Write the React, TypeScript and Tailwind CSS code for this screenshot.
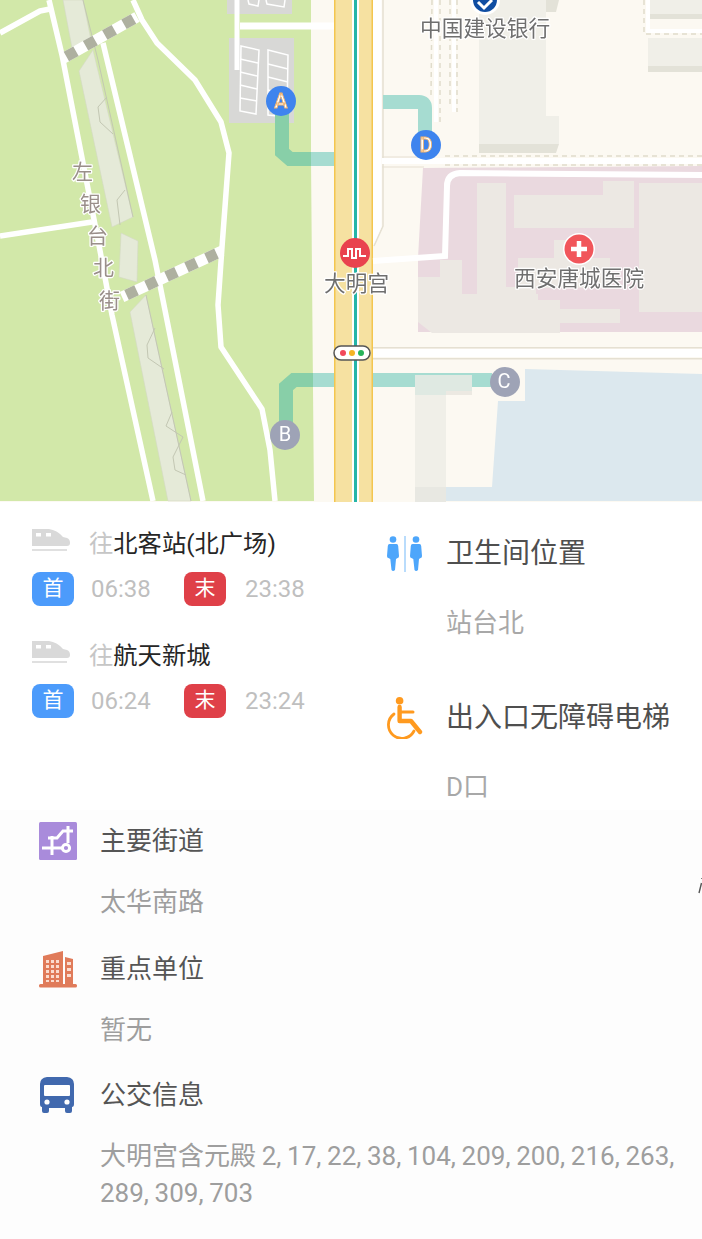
const cjk = "font-['Roboto','Noto_Sans_CJK_SC',sans-serif]";

function MapView() {
  const labelCls = { fontFamily: "'Noto Sans CJK SC', sans-serif", paintOrder: 'stroke' as const, stroke: '#ffffff', strokeWidth: 2.5, strokeLinejoin: 'round' as const };
  return (
    <svg viewBox="0 0 702 502" width="702" height="502" className="block blur-[0.5px]">
      <rect width="702" height="502" fill="#fcf9f2" />
      {/* park */}
      <polygon points="0,0 311,0 311,160 314,501 0,501" fill="#d2e8a9" />

      {/* green islands */}
      <g fill="#e5ead8" stroke="#d4d9c4" strokeWidth="0.6">
        <polygon points="63,0 83,0 91,40 72,48" />
        <polygon points="79,71 93,50 133,217 112,227" />
        <polygon points="121,233 138,241 137,282 119,277" />
        <polygon points="130,312 146,295 191,501 168,501" />
      </g>
      <g fill="none" stroke="#c3c7b3" strokeWidth="1">
        <path d="M83 0 L98 60 L133 217" />
        <path d="M146 295 L191 501" />
        <path d="M107 97 L98 107 L100 122 L113 134" />
        <path d="M125 190 L117 200 L120 225" />
        <path d="M155 328 L147 345 L148 358 L164 369" />
        <path d="M172 412 L166 426 L183 437 L173 457 L175 470 L186 475" />
      </g>

      {/* park paths */}
      <g fill="none" stroke="#ffffff" strokeWidth="5.5" strokeLinejoin="round">
        <path d="M49 0 L62 55 L98 240 L112 315 L153 501" />
        <path d="M103 43 L155 260 L203 501" />
        <path d="M133 0 L142 20 L157 43 L195 80 L221 122 L229 153 L222 247 L218 305 L221 347 L262 409 L270 450 L275 501" />
        <path d="M0 33 L40 11 L50 9" />
        <path d="M0 236 L92 222" />
      </g>
      <g fill="none" strokeWidth="11">
        <path d="M62 59 L137 17" stroke="#ffffff" />
        <path d="M62 59 L137 17" stroke="#aeb0a0" strokeDasharray="11 11" strokeDashoffset="-5" />
        <path d="M122 297 L222 251" stroke="#ffffff" />
        <path d="M122 297 L222 251" stroke="#aeb0a0" strokeDasharray="11 11" strokeDashoffset="-5" />
      </g>

      {/* parking */}
      <rect x="227" y="0" width="65" height="14" fill="#d8d8d6" />
      <rect x="229" y="38" width="65" height="85" fill="#d8d8d6" />
      <g fill="none" stroke="#ffffff" strokeWidth="1.5">
        <path d="M241 46 L259 50 L256 114 L240 111 Z" />
        <path d="M240 59 L258 63 M240 72 L257 76 M240 85 L257 89 M240 98 L257 101" />
        <path d="M268 50 L288 55 L287 117 L268 115 Z" />
        <path d="M268 64 L288 69 M268 77 L288 82 M268 90 L288 95 M268 103 L287 106" />
        <path d="M248 0 L249 4 L258 6 L259 0 M266 0 L267 4 L284 7 L285 0" />
      </g>
      <path d="M237 0 L237 70" stroke="#ffffff" strokeWidth="5" />
      <path d="M240 26 L334 26" stroke="#ffffff" strokeWidth="7" />

      {/* side road */}
      <path d="M383 0 L383 226 L374 246" fill="none" stroke="#e5e0d2" strokeWidth="1.5" />
      <path d="M377 0 L377 226 L368 246" fill="none" stroke="#ffffff" strokeWidth="9" />

      {/* main road */}
      <rect x="334" y="0" width="39" height="502" fill="#f6e1a1" />
      <rect x="334" y="0" width="1.5" height="502" fill="#f3c64f" />
      <rect x="371.5" y="0" width="1.5" height="502" fill="#f3c64f" />
      <rect x="352" y="0" width="7" height="502" fill="#ffffff" />
      <rect x="354" y="0" width="3" height="502" fill="#25b5a8" />

      {/* buildings top */}
      <rect x="479" y="0" width="67" height="116" fill="#f0efe8" />
      <rect x="479" y="116" width="80" height="28" fill="#f0efe8" />
      <polygon points="479,144 559,144 556,153 479,153" fill="#e3e2d8" />
      <polygon points="546,0 559,0 556,12 546,12" fill="#e3e2d8" />
      <rect x="650" y="0" width="52" height="14" fill="#f0efe8" />
      <rect x="650" y="14" width="52" height="5" fill="#e3e2d8" />
      <rect x="648" y="38" width="54" height="28" fill="#f0efe8" />
      <rect x="648" y="66" width="54" height="6" fill="#e3e2d8" />

      {/* dashed lanes */}
      <g fill="none" strokeWidth="1.5" stroke="#e0dccb" strokeDasharray="5 4">
        <path d="M432 0 L431 95" />
        <path d="M440 0 L440 125" />
        <path d="M450 0 L450 108" />
        <path d="M457 0 L457 112" />
        <path d="M644 0 L644 34 L702 34" />
        <path d="M445 156 L702 156" />
        <path d="M445 165 L702 165" />
      </g>
      <g fill="none" stroke="#ffffff" strokeWidth="4">
        <path d="M436 0 L436 122" />
        <path d="M454 0 L454 112" />
        <path d="M648 0 L648 31 L702 31" />
      </g>
      <path d="M382 157 L430 157 M382 167 L424 167" stroke="#e5e0d2" strokeWidth="1.2" />
      <path d="M382 161 L702 161" stroke="#ffffff" strokeWidth="6" />

      {/* hospital */}
      <polygon points="423,168 702,166 702,332 418,332 418,258" fill="#ead9df" />
      <g fill="#ece8e3">
        <rect x="477" y="183" width="29" height="129" />
        <rect x="514" y="195" width="120" height="33" />
        <rect x="603" y="181" width="31" height="15" />
        <rect x="639" y="183" width="63" height="129" />
        <rect x="554" y="240" width="30" height="20" />
        <rect x="518" y="258" width="92" height="30" />
        <rect x="418" y="277" width="22" height="33" />
        <rect x="440" y="260" width="22" height="50" />
        <rect x="462" y="294" width="76" height="16" />
        <rect x="506" y="287" width="30" height="10" />
        <rect x="536" y="300" width="24" height="10" />
        <rect x="560" y="309" width="60" height="14" />
        <polygon points="418,310 560,310 560,333 432,333 418,322" />
      </g>
      <path d="M702 175 L460 173 Q447 174 447 186 L445 256 L373 261" fill="none" stroke="#ffffff" strokeWidth="6" />

      {/* cross road */}
      <rect x="373" y="347" width="329" height="1.5" fill="#e5e0d2" />
      <rect x="373" y="358" width="329" height="1.5" fill="#e5e0d2" />
      <rect x="373" y="349" width="329" height="8" fill="#ffffff" />

      {/* water */}
      <polygon points="525,369 702,374 702,501 446,501 446,487 492,487 498,401 525,401" fill="#dce8ee" />

      {/* exit routes */}
      <g fill="none" strokeWidth="14">
        <path d="M282 112 L282 152 L290 159 L311 159" stroke="#88cfa8" />
        <path d="M311 159 L334 159" stroke="#a6dcd1" />
        <path d="M286 430 L286 387 L294 380 L313 380" stroke="#88cfa8" />
        <path d="M313 380 L334 380" stroke="#a6dcd1" />
        <path d="M373 380 L492 380" stroke="#a6dcd1" />
        <path d="M383 102 L419 102 Q425 102 425 108 L425 135" stroke="#a6dcd1" />
      </g>

      {/* building over route */}
      <rect x="415" y="375" width="57" height="20" fill="#dfe9e2" />
      <rect x="415" y="395" width="31" height="92" fill="#f0efe8" />
      <rect x="415" y="487" width="31" height="15" fill="#e8e8e2" />
      <rect x="446" y="391" width="26" height="4" fill="#ece9e2" />

      {/* traffic light */}
      <rect x="334" y="346" width="36" height="14" rx="7" fill="#ffffff" stroke="#555555" strokeWidth="1.5" />
      <circle cx="343" cy="353" r="3" fill="#f2495c" />
      <circle cx="352" cy="353" r="3" fill="#f5b324" />
      <circle cx="361" cy="353" r="3" fill="#27b35a" />

      {/* pins */}
      <circle cx="485" cy="0" r="15" fill="#ffffff" />
      <circle cx="485" cy="0" r="12" fill="#0f4da2" />
      <path d="M478 2 L484 8 L492 0" fill="none" stroke="#ffffff" strokeWidth="3" />
      <g style={{ fontFamily: "'Roboto', sans-serif", fontSize: 20, fontWeight: 500, textAnchor: 'middle' }}>
        <circle cx="281" cy="101" r="15" fill="#3e84ee" />
        <text x="281" y="108" fill="#ffffff" stroke="#f2b26a" strokeWidth="0.8">A</text>
        <circle cx="426" cy="145" r="15" fill="#3e84ee" />
        <text x="426" y="152" fill="#ffffff" stroke="#f2b26a" strokeWidth="0.8">D</text>
      </g>
      <g style={{ fontFamily: "'Roboto', sans-serif", fontSize: 20, textAnchor: 'middle' }}>
        <circle cx="285" cy="435" r="15" fill="#9ea3b6" />
        <text x="285" y="441" fill="#ffffff">B</text>
        <circle cx="505" cy="382" r="15" fill="#9ea3b6" />
        <text x="504" y="388" fill="#ffffff">C</text>
      </g>
      <circle cx="355" cy="253" r="15" fill="#e9424e" />
      <path d="M343 256 H348 V249 H352 V258 H356 V249 H360 V256 H366" fill="none" stroke="#ffffff" strokeWidth="2" />
      <circle cx="579" cy="249" r="16" fill="#ffffff" />
      <circle cx="579" cy="249" r="14.5" fill="#f1565b" />
      <path d="M579 241 V257 M571 249 H587" stroke="#ffffff" strokeWidth="4.5" />

      {/* labels */}
      <g style={labelCls} fontSize="21.7" fill="#6f6f6f">
        <text x="420" y="36">中国建设银行</text>
        <text x="514" y="286">西安唐城医院</text>
        <text x="324" y="291">大明宫</text>
      </g>
      <g style={labelCls} fontSize="21" fill="#9a8f8a">
        <text x="72" y="179">左</text>
        <text x="80" y="211">银</text>
        <text x="87" y="243">台</text>
        <text x="93" y="275">北</text>
        <text x="99" y="308">街</text>
      </g>
    </svg>
  );
}

function TrainIcon() {
  return (
    <svg viewBox="0 0 38 25" className="mb-[8px] h-[25px] w-[38px] shrink-0">
      <path d="M0 1 H17 Q25 2 31 9 L35 10 Q38 11 38 15 Q38 18 35 18 H0 Z" fill="#d9d9d9" />
      <rect x="4" y="5" width="5" height="3.5" fill="#ffffff" />
      <rect x="14" y="5" width="5" height="3.5" fill="#ffffff" />
      <rect x="0" y="21" width="35" height="2" fill="#e0e0e0" />
    </svg>
  );
}

function ToiletIcon() {
  return (
    <svg viewBox="0 0 36 36" className="h-[36px] w-[36px] shrink-0" fill="#4da6fb">
      <circle cx="6" cy="3.5" r="3.3" />
      <path d="M2.5 8 H9.5 Q11 8 11.2 10 L12 20 Q12 22 10.6 22 L9 23 L8 34 Q6 36 4.5 34 L3.3 23 L1.4 22 Q0 22 0 20 L0.8 10 Q1 8 2.5 8 Z" />
      <rect x="17.4" y="0" width="1.2" height="36" fill="#8cc6fa" />
      <circle cx="29" cy="3.5" r="3.3" />
      <path d="M25.5 8 H32.5 Q34 8 34.2 10 L35 20 Q35 22 33.6 22 L32 23 L31 34 Q29 36 27.5 34 L26.3 23 L24.4 22 Q23 22 23 20 L23.8 10 Q24 8 25.5 8 Z" />
    </svg>
  );
}

function WheelchairIcon() {
  return (
    <svg viewBox="0 0 36 42" className="h-[42px] w-[36px] shrink-0">
      <circle cx="12.6" cy="3.8" r="3.8" fill="#ff9a1f" />
      <path d="M12.6 10 V24 H24 L33 35" fill="none" stroke="#ff9a1f" strokeWidth="4.4" strokeLinecap="round" strokeLinejoin="round" />
      <path d="M12.6 15 H26" stroke="#ff9a1f" strokeWidth="3" strokeLinecap="round" />
      <path d="M7 17 A13.5 13.5 0 1 0 27 34" fill="none" stroke="#ff9a1f" strokeWidth="2.8" strokeLinecap="round" />
    </svg>
  );
}

function StreetIcon() {
  return (
    <svg viewBox="0 0 38 38" className="h-[38px] w-[38px] shrink-0">
      <rect width="38" height="38" rx="1.5" fill="#a98bdb" />
      <g fill="none" stroke="#ffffff" strokeWidth="3">
        <path d="M29 4 V21" />
        <path d="M9 16 H18 L24 9 H34" />
        <path d="M3 26 H23" />
        <path d="M13 14 V33" />
        <circle cx="27" cy="26" r="3.6" />
      </g>
    </svg>
  );
}

function BuildingIcon() {
  return (
    <svg viewBox="0 0 38 37" className="h-[37px] w-[38px] shrink-0">
      <path d="M4 33 V5 L24 0 V33 Z M26 6 L34 8 V33 H26 Z" fill="#e07b5a" />
      <rect x="0" y="33" width="38" height="3.5" rx="1.5" fill="#e07b5a" />
      <g fill="#fbdccf">
        <path d="M7 9 h3 v3 h-3z M12 9 h3 v3 h-3z M17 9 h3 v3 h-3z" />
        <path d="M7 14 h3 v3 h-3z M12 14 h3 v3 h-3z M17 14 h3 v3 h-3z" />
        <path d="M7 19 h3 v3 h-3z M12 19 h3 v3 h-3z M17 19 h3 v3 h-3z" />
        <path d="M7 24 h3 v3 h-3z M12 24 h3 v3 h-3z M17 24 h3 v3 h-3z" />
        <path d="M7 29 h3 v2 h-3z M12 29 h3 v2 h-3z M17 29 h3 v2 h-3z" />
        <path d="M28 11 h4 v3 h-4z M28 17 h4 v3 h-4z M28 23 h4 v3 h-4z" />
      </g>
    </svg>
  );
}

function BusIcon() {
  return (
    <svg viewBox="0 0 36 36" className="h-[36px] w-[36px] shrink-0">
      <path d="M8 0 H28 Q35 1 35 7 V27 Q35 30 33 30 V34 Q33 36 31 36 H28 Q26 36 26 34 V31 H10 V34 Q10 36 8 36 H5 Q3 36 3 34 V30 Q1 30 1 27 V7 Q1 1 8 0 Z" fill="#4169ae" />
      <rect x="5" y="8" width="26" height="11" rx="1" fill="#ffffff" />
      <circle cx="8" cy="25" r="2.6" fill="#ffffff" />
      <circle cx="28" cy="25" r="2.6" fill="#ffffff" />
    </svg>
  );
}

function LineRow({ to, first, last, className }: { to: string; first: string; last: string; className?: string }) {
  return (
    <div className={className}>
      <div className="flex h-[34px] items-center">
        <TrainIcon />
        <span className="ml-[19px] text-[24.3px] leading-[34px] text-[#c6c6c6]">往</span>
        <span className="text-[24.3px] leading-[34px] text-[#262626]">{to}</span>
      </div>
      <div className="mt-[11px] flex h-[34px] items-center">
        <span className="flex h-[34px] w-[42px] items-center justify-center rounded-[8px] bg-[#4c9bfb] text-[21px] text-white">首</span>
        <span className="ml-[17px] w-[93px] text-[24px] text-[#bfbfbf]">{first}</span>
        <span className="flex h-[34px] w-[42px] items-center justify-center rounded-[8px] bg-[#df4048] text-[21px] text-white">末</span>
        <span className="ml-[19px] text-[24px] text-[#bfbfbf]">{last}</span>
      </div>
    </div>
  );
}

function Facility({ icon, title, value, className }: { icon: React.ReactNode; title: string; value: string; className?: string }) {
  return (
    <div className={className}>
      <div className="flex h-[36px] items-center">
        <div className="flex w-[59px] items-center">{icon}</div>
        <span className="text-[28px] leading-[36px] text-[#4f4f4f]">{title}</span>
      </div>
      <div className="mt-[33px] pl-[59px] text-[26px] leading-[36px] text-[#a8a8a8]">{value}</div>
    </div>
  );
}

function InfoRow({ icon, title, value, className, valueGap }: { icon: React.ReactNode; title: string; value: string; className?: string; valueGap: string }) {
  return (
    <div className={className}>
      <div className="flex h-[36px] items-center">
        <div className="flex w-[61px] items-center">{icon}</div>
        <span className="text-[26px] leading-[36px] text-[#555555]">{title}</span>
      </div>
      <div className={`${valueGap} w-[650px] pl-[61px] text-[26px] leading-[37px] text-[#9e9e9e] [word-spacing:-0.8px]`}>{value}</div>
    </div>
  );
}

export default function App() {
  return (
    <div className={`relative h-[1239px] w-[702px] overflow-hidden bg-white ${cjk}`}>
      <MapView />

      <div className="flex h-[308px]">
        <div className="w-[355px] pl-[32px] pt-[25px]">
          <LineRow to="北客站(北广场)" first="06:38" last="23:38" />
          <LineRow to="航天新城" first="06:24" last="23:24" className="mt-[33px]" />
        </div>
        <div className="flex-1 pl-[32px] pt-[34px]">
          <Facility icon={<ToiletIcon />} title="卫生间位置" value="站台北" />
          <Facility icon={<WheelchairIcon />} title="出入口无障碍电梯" value="D口" className="mt-[59px]" />
        </div>
      </div>

      <div className="h-[429px] bg-[#fdfdfd] pl-[39px] pt-[13px]">
        <InfoRow icon={<StreetIcon />} title="主要街道" value="太华南路" valueGap="mt-[25px]" />
        <InfoRow icon={<BuildingIcon />} title="重点单位" value="暂无" valueGap="mt-[25px]" className="mt-[30px]" />
        <InfoRow icon={<BusIcon />} title="公交信息" value="大明宫含元殿 2, 17, 22, 38, 104, 209, 200, 216, 263, 289, 309, 703" valueGap="mt-[25px]" className="mt-[28px]" />
      </div>

      {/* sliver of the next page's glyph at the right edge */}
      <svg viewBox="0 0 4 16" className="absolute left-[698px] top-[878px] h-[16px] w-[4px]">
        <path d="M3 0 H4 M3.5 5 L1 15" stroke="#555555" strokeWidth="1.4" fill="none" />
      </svg>
    </div>
  );
}
